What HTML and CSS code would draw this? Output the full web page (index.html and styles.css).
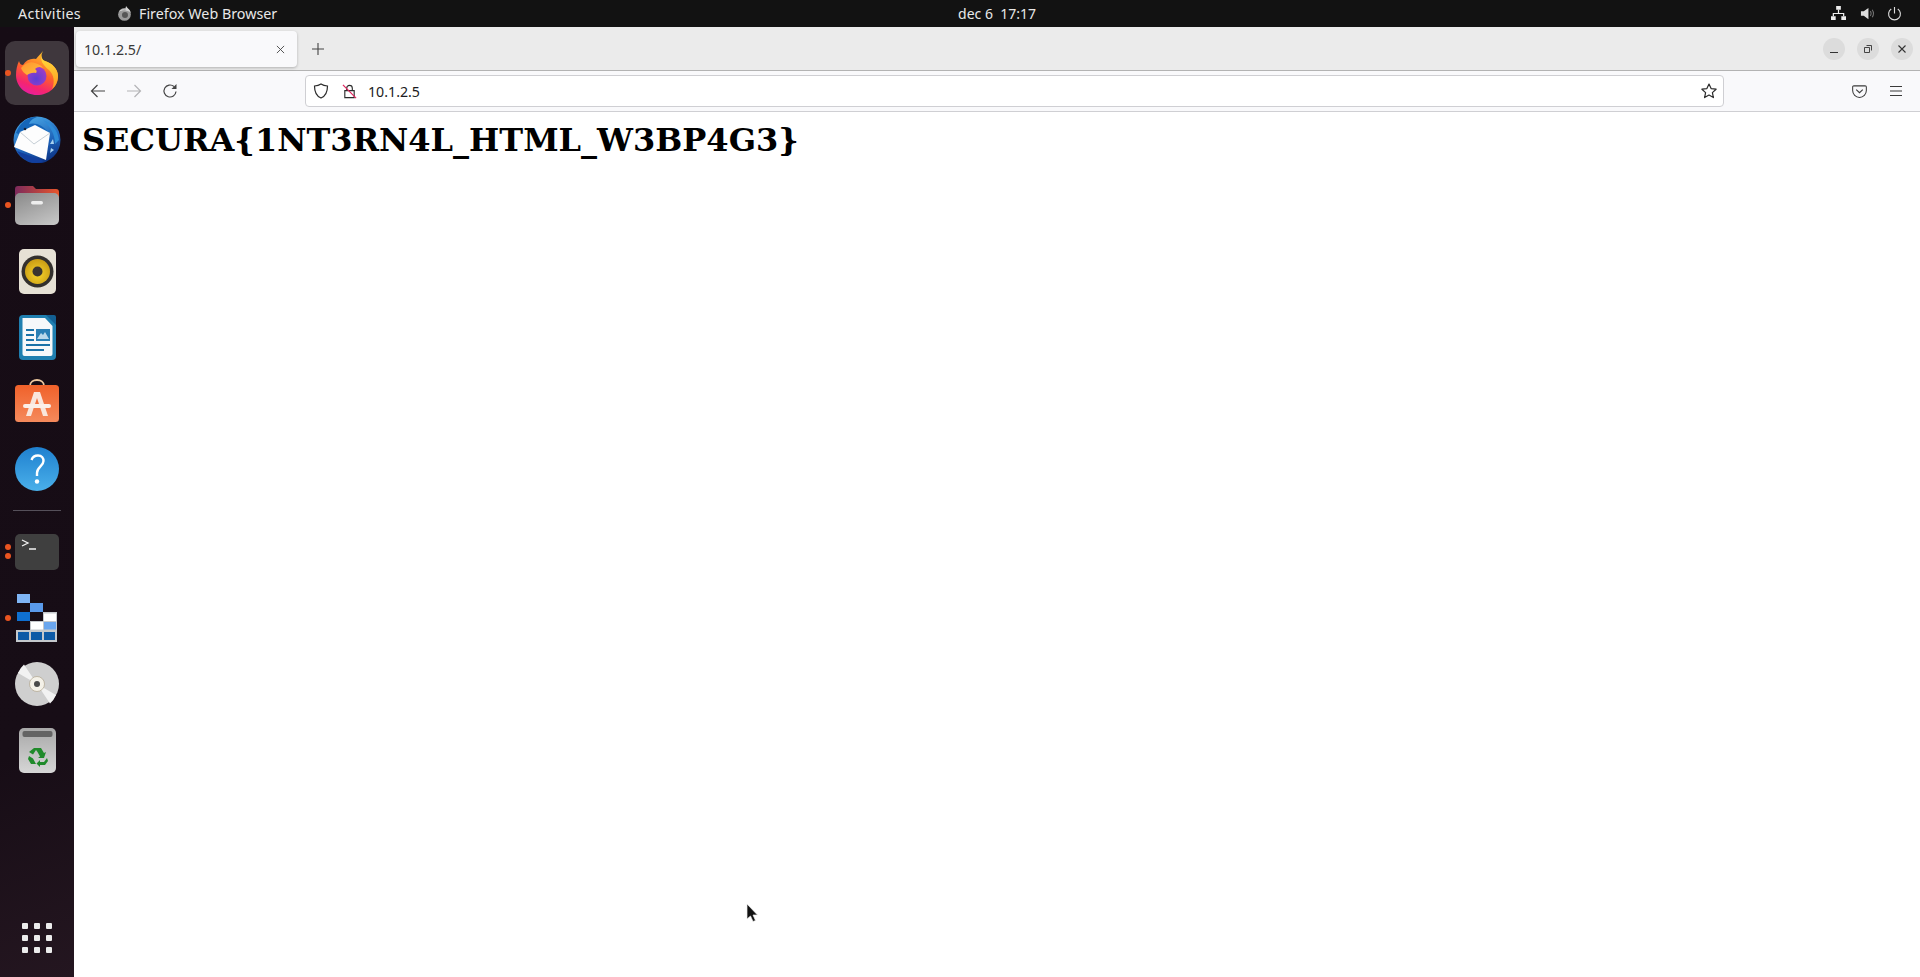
FILE: index.html
```html
<!DOCTYPE html>
<html lang="en">
<head>
<meta charset="utf-8">
<title>10.1.2.5/</title>
<link rel="stylesheet" href="styles.css">
</head>
<body>
<div class="screen">
  <header class="topbar">
    <div class="top-left">
      <span class="activities">Activities</span>
      <span class="app-menu">
        <svg class="app-icon" viewBox="0 0 16 16"><circle cx="8" cy="9" r="6.800" fill="#9a9a9a"/><circle cx="8.500" cy="9.500" r="3.200" fill="#555"/><path d="M2 6c2-3 5-3 7-2 0-1 0-3 1-4 0 2 4 3 5 8-1-2-3-3-5-3-3-1-5 0-8 1z" fill="#d4d4d4"/></svg>
        Firefox Web Browser
      </span>
    </div>
    <div class="clock">dec 6&nbsp;&nbsp;17:17</div>
    <div class="tray">
      <svg class="tray-icon" viewBox="0 0 16 16"><path d="M5.500 0h5v4h-5zM0 11h5v4H0zM11 11h5v4h-5z" fill="#eee"/><path d="M8 4v4M2.500 11V8h11v3" fill="none" stroke="#eee" stroke-width="1.300"/></svg>
      <svg class="tray-icon" viewBox="0 0 16 16"><path d="M1 5.500h3L9 2v12L4 10.500H1z" fill="#ddd"/><path d="M11 5.500c1 1.500 1 3.500 0 5M13 4c1.700 2.500 1.700 5.500 0 8" fill="none" stroke="#777" stroke-width="1.100"/></svg>
      <svg class="tray-icon tray-power" viewBox="0 0 16 16"><path d="M8 1v7M4.500 3.200a6.300 6.300 0 1 0 7 0" fill="none" stroke="#ddd" stroke-width="1.200"/></svg>
    </div>
  </header>
  <div class="desk">
    <nav class="dock">
      <div class="dock-item is-active">
        <span class="dot dot-one"></span>
        <svg class="ico ico-firefox" viewBox="0 0 42 44">
          <defs>
            <linearGradient id="ffBase" x1="0.750" y1="0.150" x2="0.400" y2="1"><stop offset="0" stop-color="#ffb52a"/><stop offset="0.450" stop-color="#ff5f2c"/><stop offset="0.800" stop-color="#f5256f"/><stop offset="1" stop-color="#e81f9a"/></linearGradient>
            <linearGradient id="ffTail" x1="0.500" y1="0" x2="0.500" y2="1"><stop offset="0" stop-color="#ffe640"/><stop offset="1" stop-color="#ff9820"/></linearGradient>
            <radialGradient id="ffGlobe" cx="0.450" cy="0.650" r="0.700"><stop offset="0" stop-color="#5a3fd6"/><stop offset="1" stop-color="#a83cc4"/></radialGradient>
            <linearGradient id="ffHead" x1="0" y1="0" x2="1" y2="1"><stop offset="0" stop-color="#ff9230"/><stop offset="1" stop-color="#ffc23a"/></linearGradient>
          </defs>
          <path d="M27 0C24 5 26 9 29 10C36 12 42 18 42 25C42 36 33 44 21 44C9 44 0 35 0 24C0 19 1 14 3 10C4 13 5 14 7 14C10 9 15 7 20 8C22 5 25 3 27 0Z" fill="url(#ffBase)"/>
          <path d="M27 0C24 5 26 9 29 10C36 12 42 18 42 25C42 30 40 35 36 38C39 31 38 24 33 19C28 15 22 9 27 0Z" fill="url(#ffTail)"/>
          <circle cx="21" cy="25" r="9.500" fill="url(#ffGlobe)"/>
          <path d="M5 17C9 12 14 10 19 12C23 13 26 15 27 17C24 15 21 16 19 18C21 19 21 21 20 22C16 21 13 23 11 24C8 22 6 20 5 17Z" fill="url(#ffHead)"/>
        </svg>
      </div>
      <div class="dock-item">
        <svg class="ico ico-bird" viewBox="0 0 48 48">
          <defs><linearGradient id="tbBlue" x1="0.300" y1="0" x2="0.700" y2="1"><stop offset="0" stop-color="#49a7e6"/><stop offset="0.600" stop-color="#1d62b8"/><stop offset="1" stop-color="#0b2f80"/></linearGradient></defs>
          <circle cx="24" cy="25" r="23.500" fill="url(#tbBlue)"/>
          <path d="M30 5c8 3 15 10 16 20l-4 4c0-10-5-18-12-24z" fill="#2d8ad6"/>
          <path d="M40 24l-3 5 4 0zM38 33l-1 5 4-3z" fill="#a9d2ef"/>
          <path d="M3 18c3-9 11-17 21-16-5 2-7 4-8 7 6-2 14 1 19 8-7-4-14-4-18-1L8 20z" fill="#1565b8"/>
          <path d="M1 32L7 17 22 10 37 18 33 45z" fill="#fdfdfd"/>
          <path d="M7 17l14 12 16-11" fill="none" stroke="#b6c1ca" stroke-width="0.800"/>
          <path d="M4 36l27 10c-3 1-5 2-8 2-9-1-15-5-19-12z" fill="#123f9e"/>
          <circle cx="12" cy="14" r="1.300" fill="#14233c"/>
        </svg>
      </div>
      <div class="dock-item">
        <span class="dot dot-one"></span>
        <svg class="ico ico-files" viewBox="0 0 44 40">
          <defs>
            <linearGradient id="fTop" x1="0" y1="0" x2="1" y2="0"><stop offset="0" stop-color="#7c2a5c"/><stop offset="1" stop-color="#e8562c"/></linearGradient>
            <linearGradient id="fBody" x1="0.200" y1="0" x2="0.800" y2="1"><stop offset="0" stop-color="#8e8e8e"/><stop offset="1" stop-color="#c4c4c4"/></linearGradient>
          </defs>
          <path d="M0 4a3 3 0 0 1 3-3h15l3 3h20a3 3 0 0 1 3 3v12H0z" fill="url(#fTop)"/>
          <rect y="8" width="44" height="32" rx="5" fill="url(#fBody)"/>
          <rect x="16" y="16" width="12" height="3.500" rx="1.700" fill="#eee"/>
        </svg>
      </div>
      <div class="dock-item">
        <svg class="ico ico-rhythm" viewBox="0 0 37 45">
          <defs><radialGradient id="rhGold" cx="0.500" cy="0.600" r="0.600"><stop offset="0" stop-color="#f7d52c"/><stop offset="1" stop-color="#c99c14"/></radialGradient></defs>
          <rect width="37" height="45" rx="5" fill="#e6e1d5"/>
          <circle cx="18.500" cy="22.500" r="16" fill="#33302d"/>
          <circle cx="18.500" cy="22.500" r="12.500" fill="url(#rhGold)"/>
          <circle cx="18.500" cy="22.500" r="5" fill="#3a3530"/>
        </svg>
      </div>
      <div class="dock-item">
        <svg class="ico ico-writer" viewBox="0 0 37 45">
          <path d="M4 0h24l9 9v32a4 4 0 0 1-4 4H4a4 4 0 0 1-4-4V4a4 4 0 0 1 4-4z" fill="#1f7fb0"/>
          <path d="M3.500 3H26l7.500 8v28a2 2 0 0 1-2 2H5.500a2 2 0 0 1-2-2z" fill="#f6f8fa"/>
          <path d="M27 0l10 10V2a2 2 0 0 0-2-2z" fill="#135f92"/>
          <path d="M7 14h8v2H7zM7 19h8v2H7zM7 24h8v2H7zM7 29h24v2H7zM7 34h18v2H7z" fill="#1a72a8"/>
          <rect x="17" y="14" width="14" height="12" fill="#2a7fb5"/>
          <path d="M18 24l4-6 2 2 2-3 4 7z" fill="#bcd9ea"/>
        </svg>
      </div>
      <div class="dock-item">
        <svg class="ico ico-store" viewBox="0 0 44 43">
          <defs><linearGradient id="stBag" x1="0" y1="0" x2="0" y2="1"><stop offset="0" stop-color="#f0612a"/><stop offset="1" stop-color="#f58a5c"/></linearGradient></defs>
          <path d="M15 7c0-8 14-8 14 0" fill="none" stroke="#eec89f" stroke-width="1.800"/>
          <rect y="6" width="44" height="37" rx="3.500" fill="url(#stBag)"/>
          <path d="M19 13h6l8 24h-5l-6-18-6 18h-5z" fill="#f9e6dc"/>
          <rect x="8" y="25" width="28" height="4" rx="2" fill="#fbefe8"/>
        </svg>
      </div>
      <div class="dock-item">
        <svg class="ico ico-help" viewBox="0 0 44 44">
          <defs><linearGradient id="hBlue" x1="0" y1="0" x2="0" y2="1"><stop offset="0" stop-color="#1f80cf"/><stop offset="1" stop-color="#4ab0ea"/></linearGradient></defs>
          <circle cx="22" cy="22" r="22" fill="url(#hBlue)"/>
          <path d="M16.500 13c1-3 4-4.500 6.500-4.500 4 0 5.500 3 5.500 5.500 0 5-6.500 6-6.500 12v3" fill="none" stroke="#fff" stroke-width="2.400"/>
          <circle cx="22" cy="34.500" r="2.200" fill="#fff"/>
        </svg>
      </div>
      <div class="dock-sep"><span class="sep-line"></span></div>
      <div class="dock-item">
        <span class="dot dot-two-a"></span><span class="dot dot-two-b"></span>
        <svg class="ico ico-term" viewBox="0 0 44 36">
          <rect width="44" height="36" rx="5" fill="#3f3f3f"/>
          <path d="M7 6l6 3-6 3M14 15h7" fill="none" stroke="#f2f2f2" stroke-width="1.300"/>
        </svg>
      </div>
      <div class="dock-item">
        <span class="dot dot-one"></span>
        <svg class="ico ico-deja" viewBox="0 0 42 48">
          <rect x="1" y="0" width="13" height="9" fill="#7fb5f5"/>
          <rect x="14" y="9" width="13" height="9" fill="#5a9aea"/>
          <rect x="1" y="18" width="13" height="9" fill="#0f6fd0"/>
          <path d="M27 18h14v30H0V36h14v-9h13z" fill="#c4c8cc"/>
          <rect x="28" y="19.500" width="12" height="7.500" fill="#fff"/>
          <rect x="15" y="28" width="12" height="7.500" fill="#fff"/>
          <rect x="28" y="28" width="12" height="7.500" fill="#6aa6ee"/>
          <rect x="2" y="38" width="11" height="8" fill="#0d5aa6"/>
          <rect x="15" y="38" width="11" height="8" fill="#0d5aa6"/>
          <rect x="28" y="38" width="11" height="8" fill="#0d5aa6"/>
        </svg>
      </div>
      <div class="dock-item">
        <svg class="ico ico-disc" viewBox="0 0 44 44">
          <circle cx="22" cy="22" r="22" fill="#cfcfcf"/>
          <path d="M3 11L22 22 9 2.500A22 22 0 0 0 3 11zM41 33L22 22l13 19.500A22 22 0 0 0 41 33z" fill="#f2f2f2"/>
          <circle cx="22" cy="22" r="7.500" fill="#f4f1e8" stroke="#a89a80" stroke-width="0.600"/>
          <circle cx="22" cy="22" r="3" fill="#4a4a4a"/>
        </svg>
      </div>
      <div class="dock-item">
        <svg class="ico ico-trash" viewBox="0 0 37 45">
          <defs><linearGradient id="trBody" x1="0" y1="0" x2="0" y2="1"><stop offset="0" stop-color="#a8a8a8"/><stop offset="1" stop-color="#d6d6d6"/></linearGradient></defs>
          <rect width="37" height="45" rx="5" fill="url(#trBody)"/>
          <rect x="3.500" y="3" width="30" height="6" rx="2" fill="#646464"/>
          <path d="M15 20h7l3 5 2-1-2 6h-6l2-1.500-2.500-4.500-1.500-2-3 4.500-4-2.500zM10 28l4 2.500 3 5.500h-5l-3-5zM28 30l1 3-3 4h-5v2l-3.500-3.500L21 32v2h4z" fill="#1f8a2a"/>
        </svg>
      </div>
      <div class="dock-apps">
        <div class="apps-grid">
          <i class="apps-cell"></i><i class="apps-cell"></i><i class="apps-cell"></i>
          <i class="apps-cell"></i><i class="apps-cell"></i><i class="apps-cell"></i>
          <i class="apps-cell"></i><i class="apps-cell"></i><i class="apps-cell"></i>
        </div>
      </div>
    </nav>
    <main class="window">
      <div class="tabbar">
        <div class="tab">
          <span class="tab-title">10.1.2.5/</span>
          <svg class="tab-close" viewBox="0 0 10 10"><path d="M1 1l8 8M9 1l-8 8" fill="none" stroke="#444" stroke-width="1"/></svg>
        </div>
        <svg class="new-tab" viewBox="0 0 12 12"><path d="M6 0v12M0 6h12" fill="none" stroke="#444" stroke-width="1.100"/></svg>
        <div class="win-buttons">
          <span class="win-btn"><svg class="win-ico" viewBox="0 0 10 10"><path d="M1 8.500h8" stroke="#333" stroke-width="1"/></svg></span>
          <span class="win-btn"><svg class="win-ico" viewBox="0 0 10 10"><path d="M1.500 3.500h5v5h-5zM3.500 1.500h5v5" fill="none" stroke="#333" stroke-width="0.900"/></svg></span>
          <span class="win-btn"><svg class="win-ico" viewBox="0 0 10 10"><path d="M1.500 1.500l7 7M8.500 1.500l-7 7" fill="none" stroke="#333" stroke-width="1.100"/></svg></span>
        </div>
      </div>
      <div class="toolbar">
        <svg class="nav-ico nav-back" viewBox="0 0 16 16"><path d="M15 8H1.500M7.500 2l-6 6 6 6" fill="none" stroke="#444" stroke-width="1.200"/></svg>
        <svg class="nav-ico nav-fwd" viewBox="0 0 16 16"><path d="M1 8h13.500M8.500 2l6 6-6 6" fill="none" stroke="#b4b4b6" stroke-width="1.200"/></svg>
        <svg class="nav-ico nav-reload" viewBox="0 0 16 16"><path d="M14 8.500A6 6 0 1 1 12 3.500" fill="none" stroke="#444" stroke-width="1.200"/><path d="M14.500 1v5h-5z" fill="#444"/></svg>
        <div class="urlbar">
          <svg class="url-shield" viewBox="0 0 16 16"><path d="M8 1c2 1.300 4 1.800 6.500 2 0 6-1.500 10-6.500 12C3 13 1.500 9 1.500 3 4 2.800 6 2.300 8 1z" fill="none" stroke="#2b2b2b" stroke-width="1.200"/></svg>
          <svg class="url-lock" viewBox="0 0 16 16"><path d="M5 7V4.500a3 3 0 0 1 6 0V7M3 7h10v7.500H3z" fill="none" stroke="#2b2b2b" stroke-width="1.200"/><path d="M1 1l14 14" stroke="#e0245e" stroke-width="1.300"/></svg>
          <span class="url-text">10.1.2.5</span>
          <svg class="url-star" viewBox="0 0 16 16"><path d="M8 1l2.100 4.600 5 .6-3.700 3.400 1 5L8 12.100l-4.400 2.500 1-5L.9 6.200l5-.6z" fill="none" stroke="#2b2b2b" stroke-width="1.200" stroke-linejoin="round"/></svg>
        </div>
        <svg class="tool-ico tool-pocket" viewBox="0 0 16 16"><path d="M2 2h12a1.300 1.300 0 0 1 1.300 1.300V7A7.300 7.300 0 0 1 .7 7V3.300A1.300 1.300 0 0 1 2 2z" fill="none" stroke="#3a3a3a" stroke-width="1.100"/><path d="M4.500 6L8 9.300 11.500 6" fill="none" stroke="#3a3a3a" stroke-width="1.200"/></svg>
        <svg class="tool-ico tool-menu" viewBox="0 0 14 12"><path d="M1 1.500h12M1 6h12M1 10.500h12" stroke="#3a3a3a" stroke-width="1.200"/></svg>
      </div>
      <article class="content">
        <h1 class="flag">SECURA{1NT3RN4L_HTML_W3BP4G3}</h1>
      </article>
    </main>
  </div>
  <svg class="cursor" viewBox="0 0 12 20"><path d="M1 1v15l3.500-3 2.500 5.500 2.500-1L7 12h4.500z" fill="#111" stroke="#eee" stroke-width="0.700"/></svg>
</div>
</body>
</html>
```

FILE: styles.css
```css
html, body {
  margin: 0;
  padding: 0;
  background: #fff;
}

.screen {
  position: relative;
  width: 1920px;
  height: 977px;
  overflow: hidden;
  display: flex;
  flex-direction: column;
}

/* top bar */
.topbar {
  height: 27px;
  flex: none;
  background: #121212;
  color: #e8e8e8;
  font: 14.300px "Noto Sans", sans-serif;
  display: flex;
  align-items: center;
}

.top-left {
  width: 958px;
  display: flex;
  align-items: center;
  padding-left: 18px;
  box-sizing: border-box;
}

.activities {
  width: 99px;
  letter-spacing: 0.350px;
}

.app-menu {
  display: flex;
  align-items: center;
  gap: 7px;
}

.app-icon {
  width: 15px;
  height: 15px;
}

.clock {
  width: 78px;
  text-align: center;
  white-space: nowrap;
  font-size: 14px;
}

.tray {
  flex: 1;
  display: flex;
  justify-content: flex-end;
  align-items: center;
  gap: 14px;
  padding-right: 18px;
}

.tray-icon {
  width: 15px;
  height: 15px;
}

.tray-power {
  margin-left: -2px;
}

/* dock */
.desk {
  flex: 1;
  display: flex;
  min-height: 0;
}

.dock {
  width: 74px;
  flex: none;
  padding-top: 13px;
  padding-bottom: 6px;
  box-sizing: border-box;
  background: linear-gradient(160deg, #160c15 0%, #170d16 75%, #241620 100%);
  display: flex;
  flex-direction: column;
  align-items: center;
}

.dock-item {
  position: relative;
  width: 74px;
  height: 66px;
  flex: none;
  display: flex;
  align-items: center;
  justify-content: center;
}

.dock-item.is-active::before {
  content: "";
  position: absolute;
  left: 5px;
  top: 1px;
  width: 64px;
  height: 64px;
  border-radius: 10px;
  background: #3f373d;
}

.dot {
  position: absolute;
  left: 5px;
  width: 6px;
  height: 6px;
  border-radius: 50%;
  background: #e95420;
}

.dot-one { top: 30px; }
.dot-two-a { top: 25px; }
.dot-two-b { top: 34px; }

.ico {
  position: relative;
  display: block;
}

.ico-firefox { width: 42px; height: 44px; }
.ico-bird { width: 48px; height: 48px; }
.ico-files { width: 44px; height: 40px; }
.ico-rhythm { width: 37px; height: 45px; }
.ico-writer { width: 37px; height: 45px; }
.ico-store { width: 44px; height: 43px; margin-bottom: 5px; }
.ico-help { width: 44px; height: 44px; }
.ico-term { width: 44px; height: 36px; }
.ico-deja { width: 42px; height: 48px; }
.ico-disc { width: 44px; height: 44px; }
.ico-trash { width: 37px; height: 45px; }

.dock-sep {
  height: 17px;
  width: 74px;
  flex: none;
  display: flex;
  justify-content: center;
  align-items: center;
}

.sep-line {
  width: 48px;
  height: 1px;
  background: #55505a;
}

.dock-apps {
  margin-top: auto;
  height: 66px;
  display: flex;
  align-items: center;
  justify-content: center;
}

.apps-grid {
  display: grid;
  grid-template-columns: repeat(3, 6px);
  grid-auto-rows: 6px;
  gap: 6px;
}

.apps-cell {
  background: #ececec;
  border-radius: 1px;
}

/* browser window */
.window {
  flex: 1;
  min-width: 0;
  display: flex;
  flex-direction: column;
  background: #fff;
}

.tabbar {
  height: 44px;
  flex: none;
  box-sizing: border-box;
  background: #ebebeb;
  border-bottom: 1px solid #b3b3b3;
  display: flex;
  align-items: center;
  padding-left: 2px;
  padding-top: 1px;
}

.tab {
  width: 221px;
  height: 36px;
  box-sizing: border-box;
  background: #f9f9fb;
  border-radius: 4px;
  box-shadow: 0 1px 3px rgba(0, 0, 0, 0.25);
  display: flex;
  align-items: center;
  justify-content: space-between;
  padding: 0 12px 0 8px;
  color: #3a3a3a;
  font: 14.200px "Noto Sans", sans-serif;
}

.tab-close {
  width: 9px;
  height: 9px;
}

.new-tab {
  width: 12px;
  height: 12px;
  margin-left: 15px;
}

.win-buttons {
  margin-left: auto;
  display: flex;
  gap: 12px;
  padding-right: 7px;
}

.win-btn {
  width: 22px;
  height: 22px;
  border-radius: 50%;
  background: #dcdcdc;
  display: flex;
  align-items: center;
  justify-content: center;
}

.win-ico {
  width: 10px;
  height: 10px;
}

.toolbar {
  height: 41px;
  flex: none;
  box-sizing: border-box;
  background: #f9f9fb;
  border-bottom: 1px solid #cfcfd3;
  display: flex;
  align-items: center;
  padding-left: 16px;
}

.nav-ico {
  width: 16px;
  height: 16px;
  flex: none;
}

.nav-fwd { margin-left: 20px; }
.nav-reload { margin-left: 20px; }

.urlbar {
  width: 1419px;
  height: 32px;
  flex: none;
  margin-left: 127px;
  box-sizing: border-box;
  background: #fff;
  border: 1px solid #cfcfd3;
  border-radius: 4px;
  display: flex;
  align-items: center;
  padding-left: 7px;
  padding-right: 6px;
  color: #1c1b22;
  font: 14.200px "Noto Sans", sans-serif;
}

.url-shield {
  width: 16px;
  height: 16px;
}

.url-lock {
  width: 15px;
  height: 15px;
  margin-left: 13px;
}

.url-text {
  margin-left: 11px;
}

.url-star {
  width: 16px;
  height: 16px;
  margin-left: auto;
}

.tool-ico {
  flex: none;
}

.tool-pocket {
  width: 15px;
  height: 15px;
  margin-left: 128px;
}

.tool-menu {
  width: 14px;
  height: 12px;
  margin-left: 22px;
}

.content {
  flex: 1;
  padding: 9px 8px 8px;
}

.flag {
  margin: 0;
  color: #000;
  font: bold 32px "DejaVu Serif", serif;
  white-space: nowrap;
}

.cursor {
  position: absolute;
  left: 746px;
  top: 903px;
  width: 12px;
  height: 20px;
}
```
